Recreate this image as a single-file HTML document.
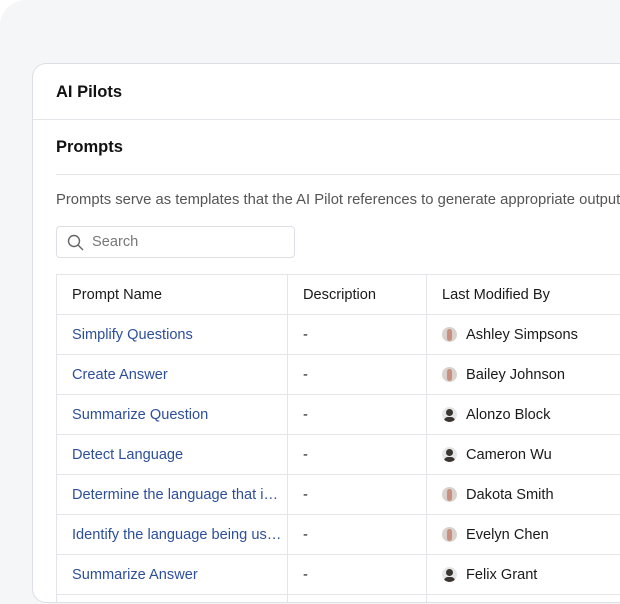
<!DOCTYPE html>
<html><head><style>
*{margin:0;padding:0;box-sizing:border-box}
html,body{width:620px;height:604px;overflow:hidden}
body{background:#fff;font-family:"Liberation Sans",sans-serif;position:relative}
.bg{position:absolute;left:0;top:0;width:620px;height:604px;background:#f5f6f7;border-radius:26px 0 0 0}
.card{position:absolute;left:32px;top:63px;width:588px;height:540px;background:#fff;border:1px solid #dcdfe3;border-right:none;border-radius:14px 0 0 14px;overflow:hidden}
.t1{position:absolute;left:23px;top:19px;font-size:16.5px;font-weight:bold;color:#111}
.l1{position:absolute;left:0;right:0;top:55px;border-top:1px solid #e3e5e8}
.t2{position:absolute;left:23px;top:74px;font-size:16.5px;font-weight:bold;color:#111}
.l2{position:absolute;left:23px;right:0;top:110px;border-top:1px solid #e3e5e8}
.desc{position:absolute;left:23px;top:128px;font-size:14.8px;color:#555;white-space:nowrap}
.search{position:absolute;left:23px;top:162px;width:239px;height:32px;border:1px solid #dcdfe3;border-radius:4px}
.search span{position:absolute;left:35px;top:7px;font-size:14.6px;color:#777}
table{position:absolute;left:23px;top:210px;border-collapse:collapse;font-size:14.6px;color:#1a1a1a;table-layout:fixed;width:600px}
td{border:1px solid #e3e5e8;height:40px;padding:0 15px;white-space:nowrap;overflow:hidden;text-overflow:ellipsis}
td.a{color:#2d4f9a;padding-right:2px}
.av{display:inline-block;width:15px;height:15px;border-radius:50%;background:#d8d2cf;vertical-align:-3px;margin-right:9px;position:relative;overflow:hidden}
.av.m{background:#e6e6e6}
.av.m:after{content:"";position:absolute;left:4px;top:2px;width:7px;height:7px;background:#3a3530;border-radius:50%}
.av.m:before{content:"";position:absolute;left:2px;top:10px;width:11px;height:6px;background:#3a3530;border-radius:4px 4px 0 0}
.av.f:after{content:"";position:absolute;left:5px;top:2px;width:5px;height:12px;background:#c99080;border-radius:3px}
</style></head><body>
<div class="bg"></div>
<div class="card">
<div class="t1">AI Pilots</div><div class="l1"></div>
<div class="t2">Prompts</div><div class="l2"></div>
<div class="desc">Prompts serve as templates that the AI Pilot references to generate appropriate outputs.</div>
<div class="search"><svg width="18" height="18" style="position:absolute;left:10px;top:7px" viewBox="0 0 18 18"><circle cx="7" cy="7" r="5.5" fill="none" stroke="#666" stroke-width="1.4"/><path d="M11 11l5 5" stroke="#666" stroke-width="1.4"/></svg><span>Search</span></div>
<table>
<colgroup><col style="width:231px"><col style="width:139px"><col style="width:230px"></colgroup>
<tr><td style="color:#1a1a1a">Prompt Name</td><td>Description</td><td>Last Modified By</td></tr>
<tr><td class="a">Simplify Questions</td><td>-</td><td><span class="av f"></span>Ashley Simpsons</td></tr>
<tr><td class="a">Create Answer</td><td>-</td><td><span class="av f"></span>Bailey Johnson</td></tr>
<tr><td class="a">Summarize Question</td><td>-</td><td><span class="av m"></span>Alonzo Block</td></tr>
<tr><td class="a">Detect Language</td><td>-</td><td><span class="av m"></span>Cameron Wu</td></tr>
<tr><td class="a">Determine the language that is…</td><td>-</td><td><span class="av f"></span>Dakota Smith</td></tr>
<tr><td class="a">Identify the language being us…</td><td>-</td><td><span class="av f"></span>Evelyn Chen</td></tr>
<tr><td class="a">Summarize Answer</td><td>-</td><td><span class="av m"></span>Felix Grant</td></tr>
<tr><td></td><td></td><td></td></tr>
</table>
</div>
</body></html>
